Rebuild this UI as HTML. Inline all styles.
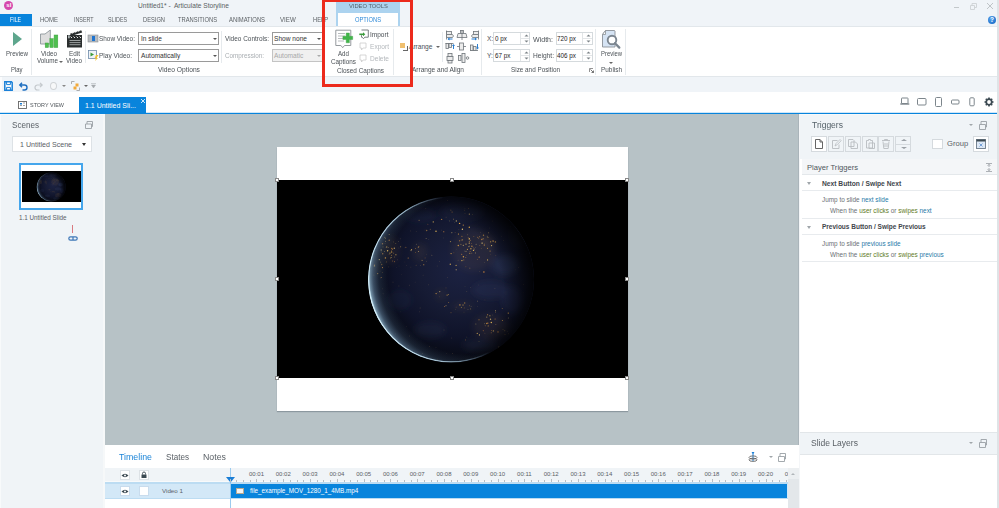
<!DOCTYPE html>
<html><head><meta charset="utf-8">
<style>
*{box-sizing:border-box}
html,body{margin:0;padding:0}
body{width:999px;height:508px;overflow:hidden;position:relative;background:#f0f4f8;font-family:"Liberation Sans",sans-serif;color:#505558}
.a{position:absolute}
.t{position:absolute;white-space:nowrap;line-height:10px;height:10px}
.sep{position:absolute;width:1px;background:#e6eaed}
.dd{position:absolute;background:#fff;border:1px solid #9a9a9a;height:13px}
.ar{position:absolute;width:0;height:0;border-left:2px solid transparent;border-right:2px solid transparent;border-top:2px solid #555}
.rl{font-size:6.6px;color:#4b5156}
.gl{font-size:6.5px;color:#4b5156}
svg{position:absolute;overflow:visible}
</style></head><body>

<!-- ===== Title bar ===== -->
<div class="a" style="left:4.2px;top:0.5px;width:9.3px;height:9.3px;border-radius:50%;background:#d548ad"></div>
<div class="t" style="left:6.3px;top:0px;font-size:6px;color:#fff;font-weight:bold">sl</div>
<div class="t" style="left:138px;top:0.7px;font-size:6.6px;color:#595e62">Untitled1* -&nbsp; Articulate Storyline</div>
<div class="a" style="left:954px;top:7px;width:5px;height:1px;background:#c3c8cb"></div>
<svg style="left:970px;top:3px" width="7" height="7"><path d="M0.5 2.5h4v4h-4z M2 2.5v-2h4.5v4h-2" fill="none" stroke="#cdd1d4" stroke-width="0.9"/></svg>
<svg style="left:987px;top:3px" width="6" height="6"><path d="M0 0L6 6M6 0L0 6" stroke="#b9bec1" stroke-width="0.9"/></svg>

<!-- ===== Tabs row ===== -->
<div class="a" style="left:0;top:14px;width:32px;height:12px;background:#0884dc"></div>
<div class="t" style="left:10px;top:15.2px;font-size:6.86px;color:#fff;transform:scaleX(0.76);transform-origin:0 50%">FILE</div>
<div class="t" style="left:40px;top:15.2px;font-size:6.86px;color:#5a5f63;transform:scaleX(0.875);transform-origin:0 50%">HOME</div>
<div class="t" style="left:74px;top:15.2px;font-size:6.86px;color:#5a5f63;transform:scaleX(0.78);transform-origin:0 50%">INSERT</div>
<div class="t" style="left:108px;top:15.2px;font-size:6.86px;color:#5a5f63;transform:scaleX(0.78);transform-origin:0 50%">SLIDES</div>
<div class="t" style="left:143px;top:15.2px;font-size:6.86px;color:#5a5f63;transform:scaleX(0.837);transform-origin:0 50%">DESIGN</div>
<div class="t" style="left:178px;top:15.2px;font-size:6.86px;color:#5a5f63;transform:scaleX(0.846);transform-origin:0 50%">TRANSITIONS</div>
<div class="t" style="left:229px;top:15.2px;font-size:6.86px;color:#5a5f63;transform:scaleX(0.854);transform-origin:0 50%">ANIMATIONS</div>
<div class="t" style="left:280px;top:15.2px;font-size:6.86px;color:#5a5f63;transform:scaleX(0.9);transform-origin:0 50%">VIEW</div>
<div class="t" style="left:313px;top:15.2px;font-size:6.86px;color:#5a5f63;transform:scaleX(0.85);transform-origin:0 50%">HELP</div>
<div class="a" style="left:988px;top:16px;width:8px;height:8px;border-radius:50%;background:radial-gradient(circle at 40% 35%,#5aa6ee,#0b5fc0)"></div>
<div class="t" style="left:990px;top:15px;font-size:6.5px;color:#fff;font-weight:bold">?</div>

<!-- video tools contextual -->
<div class="a" style="left:336px;top:2px;width:64px;height:25px;background:#acd3ef"></div>
<div class="t" style="left:349px;top:0.6px;font-size:6.17px;color:#53606a;transform:scaleX(0.937);transform-origin:0 50%">VIDEO TOOLS</div>
<div class="a" style="left:338px;top:13px;width:60px;height:14px;background:#fff"></div>
<div class="t" style="left:355px;top:15.2px;font-size:7.27px;color:#2f8ad8;transform:scaleX(0.795);transform-origin:0 50%">OPTIONS</div>

<!-- ===== Ribbon ===== -->
<div class="a" style="left:0;top:26px;width:997px;height:1px;background:#e2e7eb"></div>
<div class="a" style="left:0;top:27px;width:997px;height:49px;background:#fff"></div>
<div class="a" style="left:0;top:76px;width:997px;height:1px;background:#e2e7eb"></div>

<!-- group Play -->
<svg style="left:13px;top:32px" width="10" height="15"><path d="M0 0L9 7L0 14Z" fill="#5ea68d"/></svg>
<div class="t rl" style="left:6px;top:49px;font-size:6.60px;transform:scaleX(0.937);transform-origin:0 50%">Preview</div>
<div class="t gl" style="left:11px;top:65px;font-size:6.60px;transform:scaleX(0.896);transform-origin:0 50%">Play</div>
<div class="sep" style="left:31px;top:29px;height:46px"></div>

<!-- Video Volume / Edit Video -->
<svg style="left:36px;top:28px" width="24" height="22">
 <path d="M4.5 6h4.5l5.3-4v14h-5.3h-4.5z" fill="#dedede" stroke="#8f979c" stroke-width="0.9" stroke-linejoin="round"/>
 <rect x="9.2" y="15" width="3.3" height="4.5" fill="#4fc04f" stroke="#3fa03f" stroke-width="0.5"/>
 <rect x="13.9" y="10.7" width="3.3" height="8.8" fill="#4fc04f" stroke="#3fa03f" stroke-width="0.5"/>
 <rect x="18.1" y="7" width="3.7" height="12.5" fill="#4fc04f" stroke="#3fa03f" stroke-width="0.5"/>
</svg>
<div class="t rl" style="left:41px;top:49px;font-size:6.60px;transform:scaleX(0.955);transform-origin:0 50%">Video</div>
<div class="t rl" style="left:37px;top:56px;font-size:6.60px;transform:scaleX(0.954);transform-origin:0 50%">Volume</div>
<div class="ar" style="left:59px;top:61px;border-top-color:#666"></div>
<svg style="left:66px;top:28px" width="18" height="22">
 <rect x="1" y="7" width="15" height="12.5" fill="#2b2f2f"/>
 <rect x="2" y="7.3" width="1.8" height="3" fill="#a8b0b0"/>
 <path d="M4.5 8.5l1.5 1.5M7.5 8.5l1.5 1.5M10.5 8.5l1.5 1.5M13.5 8.5l1.5 1.5" stroke="#e8e8e8" stroke-width="1"/>
 <path d="M3.5 12.5h11M3.5 14.6h11M3.5 16.7h11" stroke="#b8bcbc" stroke-width="0.8"/>
 <path d="M4 5.8L15.2 2.2L16.2 4.6L5 8z" fill="#2b2f2f"/>
 <path d="M6.5 5.6l1.5-1.8M9.5 4.7l1.5-1.8M12.5 3.8l1.5-1.8" stroke="#e8e8e8" stroke-width="1"/>
</svg>
<div class="t rl" style="left:69px;top:49px;font-size:6.60px;transform:scaleX(0.967);transform-origin:0 50%">Edit</div>
<div class="t rl" style="left:66px;top:56px;font-size:6.60px;transform:scaleX(0.955);transform-origin:0 50%">Video</div>
<div class="sep" style="left:85px;top:31px;height:32px"></div>

<!-- Show/Play video -->
<svg style="left:88px;top:34px" width="11" height="9">
 <rect x="0" y="1" width="10" height="7" fill="#b8bcc0" stroke="#8a8e92" stroke-width="0.6"/>
 <rect x="4" y="2" width="3" height="5" fill="#1e74d0"/>
</svg>
<div class="t rl" style="left:99px;top:34px;font-size:6.60px;transform:scaleX(0.975);transform-origin:0 50%">Show Video:</div>
<svg style="left:88px;top:50px" width="11" height="11">
 <rect x="0.5" y="0.5" width="8" height="8" fill="#eef3f8" stroke="#6d8aa8" stroke-width="0.8"/>
 <path d="M2.5 2.5L6 4.5L2.5 6.5Z" fill="#3a9a3a"/>
 <path d="M8 5L10.5 5L8.5 8L10 8L7 11L8 8.5L6.5 8.5Z" fill="#f1c232"/>
</svg>
<div class="t rl" style="left:99px;top:51px;font-size:6.60px;transform:scaleX(0.992);transform-origin:0 50%">Play Video:</div>
<div class="dd" style="left:138px;top:32px;width:81px"></div>
<div class="t" style="left:141px;top:34px;font-size:6.6px;color:#333">In slide</div>
<div class="ar" style="left:213px;top:38px"></div>
<div class="dd" style="left:138px;top:49px;width:81px"></div>
<div class="t" style="left:141px;top:51px;font-size:6.6px;color:#333">Automatically</div>
<div class="ar" style="left:213px;top:55px"></div>
<div class="sep" style="left:221px;top:31px;height:32px"></div>
<div class="t rl" style="left:225px;top:34px;font-size:6.60px;transform:scaleX(0.978);transform-origin:0 50%">Video Controls:</div>
<div class="t" style="left:225px;top:51px;font-size:6.60px;color:#a9aeb2;transform:scaleX(0.958);transform-origin:0 50%">Compression:</div>
<div class="dd" style="left:272px;top:32px;width:52px"></div>
<div class="t" style="left:274px;top:34px;font-size:6.6px;color:#333">Show none</div>
<div class="ar" style="left:317px;top:38px"></div>
<div class="dd" style="left:272px;top:49px;width:52px;background:#f0f0f0;border-color:#c4c4c4"></div>
<div class="t" style="left:274px;top:51px;font-size:6.6px;color:#a8a8a8">Automatic</div>
<div class="ar" style="left:317px;top:55px;border-top-color:#aaa"></div>
<div class="t gl" style="left:158px;top:65px;font-size:6.60px;transform:scaleX(1.016);transform-origin:0 50%">Video Options</div>

<!-- Closed captions -->
<svg style="left:335px;top:29px" width="19" height="21">
 <path d="M0.8 1.2h15v15.3h-6.3l-1.8 2.2l-1.8-2.2h-5.1z" fill="#fff" stroke="#8a9094" stroke-width="0.9" stroke-linejoin="round"/>
 <path d="M3 4.5h7M3 7h7M3 9.5h7M3 12h6" stroke="#a6abaf" stroke-width="0.8"/>
 <path d="M11.2 4h3.2v3.3h3.3v3.2h-3.3v3.3h-3.2v-3.3h-3.3v-3.2h3.3z" fill="#41b64a" stroke="#3a9c42" stroke-width="0.4"/>
</svg>
<div class="t rl" style="left:338px;top:49px;font-size:6.60px;transform:scaleX(0.937);transform-origin:0 50%">Add</div>
<div class="t rl" style="left:331px;top:57px;font-size:6.60px;transform:scaleX(0.960);transform-origin:0 50%">Captions</div>
<svg style="left:359px;top:29px" width="10" height="11">
 <path d="M2.5 1h6.8v7.2h-3.5l-1.3 1.5l-1.3-1.5h-0.7v-2" fill="#fff" stroke="#6a7074" stroke-width="0.9" stroke-linejoin="round"/>
 <path d="M0.3 5.3h4.5" stroke="#3a9a3a" stroke-width="1.6"/><path d="M4 3.3l2.3 2l-2.3 2z" fill="#3a9a3a"/>
</svg>
<div class="t rl" style="left:370px;top:30px;font-size:6.60px;transform:scaleX(0.989);transform-origin:0 50%">Import</div>
<svg style="left:359px;top:42px" width="8" height="9">
 <path d="M1 1h6v5h-3l-1.5 2v-2h-1.5z" fill="#fff" stroke="#ccc" stroke-width="0.8"/>
</svg>
<div class="t" style="left:370px;top:42px;font-size:6.60px;color:#b4b8bc;transform:scaleX(0.996);transform-origin:0 50%">Export</div>
<svg style="left:359px;top:54px" width="8" height="9">
 <path d="M1 1h6v5h-3l-1.5 2v-2h-1.5z" fill="#fff" stroke="#ccc" stroke-width="0.8"/>
</svg>
<div class="t" style="left:370px;top:54px;font-size:6.60px;color:#b4b8bc;transform:scaleX(0.996);transform-origin:0 50%">Delete</div>
<div class="t gl" style="left:337px;top:65.5px;font-size:6.60px;transform:scaleX(0.971);transform-origin:0 50%">Closed Captions</div>
<div class="sep" style="left:393px;top:29px;height:46px"></div>

<!-- Arrange -->
<div class="a" style="left:400px;top:43px;width:5px;height:5px;background:#f0c070"></div>
<div class="a" style="left:403px;top:46px;width:5px;height:5px;border:1px solid #666;border-top:none;border-left:none"></div>
<div class="t rl" style="left:409px;top:42px">Arrange</div>
<div class="ar" style="left:436px;top:46px;border-top-color:#666"></div>
<div class="sep" style="left:442px;top:32px;height:30px"></div>
<div class="t gl" style="left:412px;top:65px;font-size:6.60px;transform:scaleX(0.991);transform-origin:0 50%">Arrange and Align</div>

<!-- align icon grid -->
<svg style="left:445px;top:30px" width="36" height="34" stroke-width="0.8">
 <g fill="#ececec" stroke="#6f757a">
  <path d="M1.5 0.5v9"/><rect x="1.5" y="1.5" width="5" height="3"/><path d="M1.5 4.5h6l1 1.5l-1 1.5h-6z"/>
  <rect x="15.5" y="0.5" width="3" height="3"/><path d="M13 3.5h8l1 4h-10z"/><path d="M17 0v10"/>
  <path d="M33.5 0.5v9"/><rect x="28.5" y="1.5" width="5" height="3"/><path d="M33.5 4.5h-6l-1 1.5l1 1.5h6z"/>
  <path d="M0.5 13.5h8"/><rect x="1" y="13.5" width="2.5" height="5"/><rect x="4" y="13.5" width="2.5" height="4"/>
  <rect x="14.5" y="13" width="4" height="7"/><path d="M12 16.5h2.5M18.5 16.5h2.5"/>
  <path d="M25 20.5h8"/><rect x="25.5" y="15" width="2.5" height="5.5"/><rect x="28.5" y="16.5" width="2.5" height="4"/>
  <rect x="3" y="23.5" width="4" height="3"/><rect x="2" y="26.5" width="6" height="4"/><rect x="3" y="30.5" width="4" height="2.5"/>
  <rect x="13.5" y="25.5" width="2.5" height="5"/><rect x="17" y="23.5" width="3" height="9"/><circle cx="22.5" cy="28" r="1.3"/>
 </g>
 <g stroke="#2a7ed0" fill="#2a7ed0">
  <path d="M3 9h4.5" stroke-width="1"/><path d="M2.5 9l2-1.5v3z" stroke="none"/>
  <path d="M26.5 9h4.5" stroke-width="1"/><path d="M32 9l-2-1.5v3z" stroke="none"/>
  <path d="M8.5 19v-4" stroke-width="1"/><path d="M8.5 14l-1.5 2h3z" stroke="none"/>
  <path d="M32.5 14v4" stroke-width="1"/><path d="M32.5 19.5l-1.5-2h3z" stroke="none"/>
 </g>
</svg>
<div class="sep" style="left:481px;top:29px;height:46px"></div>

<!-- Size and position -->
<div class="t rl" style="left:487px;top:34px">X:</div>
<div class="a" style="left:493px;top:32px;width:37px;height:13px;border:1px solid #d5dadd;background:#fff"></div>
<div class="a" style="left:520px;top:33px;width:1px;height:11px;background:#e2e5e7"></div>
<div class="a" style="left:521px;top:38px;width:8px;height:1px;background:#e2e5e7"></div>
<div class="t" style="left:495px;top:34px;font-size:6.3px;color:#222">0 px</div>
<div class="t rl" style="left:487px;top:51px">Y:</div>
<div class="a" style="left:493px;top:49px;width:37px;height:13px;border:1px solid #d5dadd;background:#fff"></div>
<div class="a" style="left:520px;top:50px;width:1px;height:11px;background:#e2e5e7"></div>
<div class="a" style="left:521px;top:55px;width:8px;height:1px;background:#e2e5e7"></div>
<div class="t" style="left:495px;top:51px;font-size:6.3px;color:#222">67 px</div>
<div class="t rl" style="left:533px;top:35px;font-size:6.60px;transform:scaleX(1.069);transform-origin:0 50%">Width:</div>
<div class="a" style="left:556px;top:32px;width:37px;height:13px;border:1px solid #d5dadd;background:#fff"></div>
<div class="a" style="left:582px;top:33px;width:1px;height:11px;background:#e2e5e7"></div>
<div class="a" style="left:583px;top:38px;width:9px;height:1px;background:#e2e5e7"></div>
<div class="t" style="left:557px;top:34px;font-size:6.3px;color:#222">720 px</div>
<div class="t rl" style="left:533px;top:51px;font-size:6.60px;transform:scaleX(1.004);transform-origin:0 50%">Height:</div>
<div class="a" style="left:556px;top:49px;width:37px;height:13px;border:1px solid #d5dadd;background:#fff"></div>
<div class="a" style="left:582px;top:50px;width:1px;height:11px;background:#e2e5e7"></div>
<div class="a" style="left:583px;top:55px;width:9px;height:1px;background:#e2e5e7"></div>
<div class="t" style="left:557px;top:51px;font-size:6.3px;color:#222">406 px</div>
<svg style="left:523.5px;top:32px" width="5" height="13"><path d="M0.5 4.5L2.5 2.5L4.5 4.5z" fill="#7d8388"/><path d="M0.5 8.5L2.5 10.5L4.5 8.5z" fill="#7d8388"/></svg><svg style="left:523.5px;top:49px" width="5" height="13"><path d="M0.5 4.5L2.5 2.5L4.5 4.5z" fill="#7d8388"/><path d="M0.5 8.5L2.5 10.5L4.5 8.5z" fill="#7d8388"/></svg><svg style="left:585.5px;top:32px" width="5" height="13"><path d="M0.5 4.5L2.5 2.5L4.5 4.5z" fill="#7d8388"/><path d="M0.5 8.5L2.5 10.5L4.5 8.5z" fill="#7d8388"/></svg><svg style="left:585.5px;top:49px" width="5" height="13"><path d="M0.5 4.5L2.5 2.5L4.5 4.5z" fill="#7d8388"/><path d="M0.5 8.5L2.5 10.5L4.5 8.5z" fill="#7d8388"/></svg>
<div class="t gl" style="left:511px;top:65px;font-size:6.60px;transform:scaleX(0.961);transform-origin:0 50%">Size and Position</div>
<svg style="left:589px;top:68px" width="5" height="5"><path d="M0.5 4V0.5H4" fill="none" stroke="#777" stroke-width="0.8"/><path d="M1.5 1.5L4.5 4.5M2.5 4.5h2v-2" fill="none" stroke="#555" stroke-width="0.8"/></svg>
<div class="sep" style="left:595px;top:29px;height:46px"></div>

<!-- Preview publish -->
<svg style="left:601px;top:29px" width="21" height="21">
 <path d="M4.5 1.5h9l0.5 0.5v16h-12.5v-12.5z" fill="#d6e4f4" stroke="#8a9096" stroke-width="0.9" stroke-linejoin="round"/>
 <path d="M1.5 5.5l3-4v4z" fill="#fff" stroke="#8a9096" stroke-width="0.8" stroke-linejoin="round"/>
 <circle cx="11" cy="11" r="4.3" fill="#fff" stroke="#7c8690" stroke-width="1.9"/>
 <path d="M14 14.3l4.3 4.3" stroke="#7c8690" stroke-width="2.3" stroke-linecap="round"/>
</svg>
<div class="t rl" style="left:601px;top:49px;font-size:6.60px;transform:scaleX(0.895);transform-origin:0 50%">Preview</div>
<div class="ar" style="left:609px;top:62px;border-top-color:#666"></div>
<div class="t gl" style="left:601px;top:65px;font-size:6.60px;transform:scaleX(0.970);transform-origin:0 50%">Publish</div>
<div class="sep" style="left:625px;top:29px;height:46px"></div>

<!-- QAT -->
<div class="a" style="left:0;top:77px;width:997px;height:15px;background:#f0f4f8"></div>
<svg style="left:4px;top:81px" width="9" height="10"><path d="M0.8 0.8h6.6l0.8 0.8v7.6h-7.4z" fill="#fff" stroke="#1a80d8" stroke-width="1.5"/><path d="M2.6 1v2.6h3.8v-2.6" fill="none" stroke="#1a80d8" stroke-width="1"/><path d="M2.6 9v-2.6h3.8v2.6" fill="none" stroke="#1a80d8" stroke-width="1"/></svg>
<svg style="left:19px;top:82px" width="9" height="8"><path d="M1 3h4.5a2.5 2.5 0 0 1 0 5h-2M3 0.8L0.8 3L3 5.2" fill="none" stroke="#1f6fc0" stroke-width="1.4"/></svg>
<svg style="left:34px;top:82px" width="9" height="8"><path d="M8 3h-4.5a2.5 2.5 0 0 0 0 5h2M6 0.8L8.2 3L6 5.2" fill="none" stroke="#c4c9cd" stroke-width="1.2"/></svg>
<div class="a" style="left:50px;top:82px;width:7px;height:8px;border-radius:50%;border:1px solid #d0d4d7;background:#f7f8f9"></div>
<div class="ar" style="left:62px;top:85px;border-top-color:#888"></div>
<svg style="left:71px;top:81px" width="9" height="10">
 <path d="M0.5 3v-2.5h3M5.5 9.5h3v-3" fill="none" stroke="#999" stroke-width="0.8"/>
 <rect x="2.5" y="5.5" width="3" height="3" fill="#f2a93b"/><rect x="4.5" y="2.5" width="3" height="3" fill="#f2a93b"/>
</svg>
<div class="ar" style="left:84px;top:85px;border-top-color:#666"></div>
<svg style="left:91px;top:83px" width="5" height="5"><path d="M0 0.5h5M0.5 2l2 3l2-3z" fill="#a5aaae" stroke="#a5aaae" stroke-width="0.5"/></svg>

<!-- Doc tab row -->
<div class="a" style="left:0;top:92px;width:997px;height:21px;background:#fff"></div>
<div class="a" style="left:0;top:112px;width:997px;height:1px;background:#cfe6f8"></div><div class="a" style="left:0;top:113px;width:999px;height:1px;background:#0884dc"></div>
<div class="a" style="left:79px;top:97px;width:67px;height:16px;background:#0884dc"></div>
<svg style="left:18px;top:101px" width="9" height="8"><rect x="0.5" y="0.5" width="8" height="7" fill="#fff" stroke="#666" stroke-width="0.9"/><rect x="2" y="2" width="2" height="1.5" fill="#1a7ed6"/><path d="M2 4.5h2M5 2h2M5 4.5h2" stroke="#888" stroke-width="0.8"/></svg>
<div class="t" style="left:30px;top:100.3px;font-size:6.17px;color:#4d5358;transform:scaleX(0.885);transform-origin:0 50%">STORY VIEW</div>
<div class="t" style="left:85px;top:100.7px;font-size:7.0px;color:#fff">1.1 Untitled Sli...</div>
<svg style="left:141px;top:99px" width="4" height="4"><path d="M0 0L4 4M4 0L0 4" stroke="#fff" stroke-width="0.8"/></svg>
<!-- device icons -->
<svg style="left:900px;top:96px" width="80" height="11" fill="none" stroke="#7d868c" stroke-width="1">
 <rect x="1.5" y="2" width="6.5" height="5.5" rx="0.5"/><path d="M0.3 8h9" stroke-width="1.4"/>
 <rect x="17.5" y="2.5" width="8.5" height="6.5" rx="1"/>
 <rect x="35.5" y="1.5" width="6" height="9" rx="1"/>
 <rect x="51.5" y="4" width="7.5" height="4" rx="1"/>
 <rect x="69.8" y="1.8" width="4.4" height="8" rx="1"/>
</svg>
<svg style="left:984px;top:97px" width="10" height="10"><g transform="translate(5,5)"><circle r="2.8" fill="none" stroke="#3c4a52" stroke-width="1.8"/><path d="M0-4.5v2M0 4.5v-2M-4.5 0h2M4.5 0h-2M-3.2-3.2l1.4 1.4M3.2 3.2l-1.4-1.4M-3.2 3.2l1.4-1.4M3.2-3.2l-1.4 1.4" stroke="#3c4a52" stroke-width="1.6"/></g></svg>

<!-- ===== Left panel ===== -->
<div class="a" style="left:0;top:114px;width:105px;height:394px;background:#f0f4f7"></div>
<div class="a" style="left:103px;top:114px;width:2px;height:394px;background:#f6f8f9"></div><div class="a" style="left:0;top:114px;width:105px;height:1px;background:#f7f9fa"></div>
<div class="t" style="left:12px;top:120px;font-size:8.64px;color:#5a6066;transform:scaleX(0.937);transform-origin:0 50%">Scenes</div>
<svg style="left:85px;top:121px" width="8" height="8"><path d="M0.5 3h6v4.5h-6z M2 3v-2.5h5.5v5h-1" fill="none" stroke="#9aa0a5" stroke-width="0.9"/></svg>
<div class="a" style="left:12px;top:136px;width:80px;height:16px;background:#fff;border:1px solid #dde2e6"></div>
<div class="t" style="left:20px;top:140px;font-size:7.1px;color:#5a6066">1 Untitled Scene</div>
<div class="ar" style="left:82px;top:143px;border-left-width:2.5px;border-right-width:2.5px;border-top-width:3px;border-top-color:#333"></div>
<div class="a" style="left:19px;top:163px;width:64px;height:47px;border:2px solid #45a6ec;background:#fff"></div>
<div class="a" style="left:22px;top:171px;width:59px;height:31px;background:#000;overflow:hidden">
<svg style="left:0;top:0" width="59" height="31"><g transform="translate(29.2,16) scale(0.175) translate(-174,-99.5)"><use href="#earthg"/></g></svg>
</div>
<div class="t" style="left:19px;top:213px;font-size:6.3px;color:#5a6066">1.1 Untitled Slide</div>
<div class="a" style="left:72px;top:225px;width:1px;height:8px;background:#d97a80"></div>
<svg style="left:68px;top:236px" width="10" height="5"><path d="M2.5 0.8h5a1.7 1.7 0 0 1 0 3.4h-5a1.7 1.7 0 0 1 0-3.4z M5 0.8v3.4" fill="none" stroke="#3e78b8" stroke-width="1.2"/></svg>

<!-- ===== Canvas ===== -->
<div class="a" style="left:105px;top:114px;width:694px;height:331px;background:#b7c2c6"></div><div class="a" style="left:798px;top:114px;width:1px;height:331px;background:#aab4ba"></div>
<div class="a" style="left:277px;top:147px;width:351px;height:264px;background:#fff;box-shadow:0 1px 1px rgba(60,75,85,0.35)"></div>
<div class="a" style="left:277px;top:180px;width:351px;height:198px;background:#000;overflow:hidden">
<svg style="left:0;top:0" width="351" height="198">
<defs>
 <radialGradient id="eb" cx="0.56" cy="0.44" r="0.56">
  <stop offset="0" stop-color="#1c2242"/>
  <stop offset="0.45" stop-color="#161b34"/>
  <stop offset="0.72" stop-color="#0f1329"/>
  <stop offset="0.88" stop-color="#0a0d1b"/>
  <stop offset="1" stop-color="#080a14"/>
 </radialGradient>
 <radialGradient id="eh" cx="0.6" cy="0.47" r="0.6">
  <stop offset="0.8" stop-color="#3e5870" stop-opacity="0"/>
  <stop offset="0.89" stop-color="#4a6580" stop-opacity="0.25"/>
  <stop offset="0.95" stop-color="#6585a2" stop-opacity="0.55"/>
  <stop offset="0.985" stop-color="#8cb0c8" stop-opacity="0.8"/>
  <stop offset="1" stop-color="#b8dcec" stop-opacity="1"/>
 </radialGradient>
 <radialGradient id="ed" cx="0.38" cy="0.56" r="0.62">
  <stop offset="0.7" stop-color="#000" stop-opacity="0"/>
  <stop offset="1" stop-color="#000" stop-opacity="0.85"/>
 </radialGradient>
 <linearGradient id="er" x1="0" y1="0.6" x2="1" y2="0.3">
  <stop offset="0" stop-color="#d4eef8" stop-opacity="1"/>
  <stop offset="0.35" stop-color="#b4d4e6" stop-opacity="0.8"/>
  <stop offset="0.58" stop-color="#90b0c8" stop-opacity="0"/>
 </linearGradient>
 <clipPath id="ec"><circle cx="174" cy="99.5" r="83"/></clipPath>
 <filter id="bl" x="-50%" y="-50%" width="200%" height="200%"><feGaussianBlur stdDeviation="3"/></filter>
 <filter id="bl2"><feGaussianBlur stdDeviation="0.35"/></filter>
</defs>
<g id="earthg"><circle cx="174" cy="99.5" r="83" fill="url(#eb)"/>
<g clip-path="url(#ec)">
 <g filter="url(#bl)"><ellipse cx="228.0" cy="85.0" rx="14" ry="10" fill="#3f4c75" opacity="0.26"/><ellipse cx="213.0" cy="110.0" rx="18" ry="9" fill="#3f4c75" opacity="0.19"/><ellipse cx="185.0" cy="32.0" rx="22" ry="8" fill="#3f4c75" opacity="0.17"/><ellipse cx="235.0" cy="120.0" rx="10" ry="14" fill="#3f4c75" opacity="0.19"/><ellipse cx="153.0" cy="150.0" rx="16" ry="8" fill="#3f4c75" opacity="0.15"/><ellipse cx="123.0" cy="120.0" rx="12" ry="10" fill="#3f4c75" opacity="0.11"/><ellipse cx="243.0" cy="55.0" rx="10" ry="12" fill="#3f4c75" opacity="0.15"/><ellipse cx="203.0" cy="165.0" rx="18" ry="7" fill="#3f4c75" opacity="0.15"/><ellipse cx="143.0" cy="35.0" rx="16" ry="8" fill="#3f4c75" opacity="0.11"/><ellipse cx="113.0" cy="70.0" rx="9.0" ry="14.0" fill="#9a7440" opacity="0.1"/><ellipse cx="143.0" cy="72.0" rx="7.0" ry="9.0" fill="#9a7440" opacity="0.1"/><ellipse cx="196.5" cy="70.0" rx="21.5" ry="21.0" fill="#9a7440" opacity="0.1"/><ellipse cx="210.5" cy="61.5" rx="7.5" ry="5.5" fill="#9a7440" opacity="0.1"/><ellipse cx="185.5" cy="126.5" rx="10.5" ry="3.5" fill="#9a7440" opacity="0.1"/><ellipse cx="214.0" cy="146.5" rx="18.0" ry="12.5" fill="#9a7440" opacity="0.1"/><ellipse cx="164.0" cy="115.0" rx="5.0" ry="5.0" fill="#9a7440" opacity="0.1"/><ellipse cx="99.0" cy="85.0" rx="4.0" ry="10.0" fill="#9a7440" opacity="0.1"/></g>
 <g filter="url(#bl2)"><circle cx="105.7" cy="73.8" r="0.70" fill="#d98c3a" opacity="0.70"/><circle cx="109.7" cy="66.7" r="0.70" fill="#e8a845" opacity="0.46"/><circle cx="112.1" cy="74.1" r="0.35" fill="#d98c3a" opacity="0.98"/><circle cx="108.3" cy="58.6" r="0.45" fill="#f3c25a" opacity="0.90"/><circle cx="114.5" cy="71.0" r="0.45" fill="#f3c25a" opacity="0.87"/><circle cx="109.3" cy="81.9" r="0.45" fill="#e8a845" opacity="0.78"/><circle cx="104.2" cy="70.0" r="0.70" fill="#ffd77a" opacity="0.64"/><circle cx="99.8" cy="62.7" r="0.35" fill="#ffd77a" opacity="0.59"/><circle cx="113.6" cy="78.2" r="0.35" fill="#f3c25a" opacity="0.64"/><circle cx="116.4" cy="61.9" r="0.35" fill="#f3c25a" opacity="0.53"/><circle cx="114.8" cy="68.5" r="0.70" fill="#d98c3a" opacity="0.65"/><circle cx="109.3" cy="67.3" r="0.55" fill="#ffd77a" opacity="0.45"/><circle cx="105.3" cy="92.4" r="0.35" fill="#e8a845" opacity="0.55"/><circle cx="114.7" cy="72.1" r="0.70" fill="#e8a845" opacity="0.81"/><circle cx="115.7" cy="81.0" r="0.45" fill="#d98c3a" opacity="0.79"/><circle cx="117.7" cy="77.0" r="0.45" fill="#f3c25a" opacity="0.56"/><circle cx="123.6" cy="66.7" r="0.55" fill="#f3c25a" opacity="0.53"/><circle cx="103.7" cy="82.1" r="0.35" fill="#f3c25a" opacity="0.99"/><circle cx="114.1" cy="77.5" r="0.55" fill="#ffd77a" opacity="0.63"/><circle cx="116.7" cy="73.1" r="0.45" fill="#f3c25a" opacity="0.76"/><circle cx="108.4" cy="77.9" r="0.70" fill="#e8a845" opacity="0.92"/><circle cx="114.4" cy="75.3" r="0.45" fill="#e8a845" opacity="0.84"/><circle cx="117.6" cy="81.8" r="0.45" fill="#d98c3a" opacity="0.93"/><circle cx="108.0" cy="63.7" r="0.35" fill="#f3c25a" opacity="0.42"/><circle cx="117.3" cy="68.3" r="0.70" fill="#ffd77a" opacity="0.65"/><circle cx="118.8" cy="63.5" r="0.45" fill="#f3c25a" opacity="0.48"/><circle cx="104.3" cy="71.9" r="0.35" fill="#ffd77a" opacity="0.53"/><circle cx="121.6" cy="61.5" r="0.35" fill="#ffd77a" opacity="0.65"/><circle cx="113.0" cy="73.1" r="0.55" fill="#ffd77a" opacity="0.72"/><circle cx="115.6" cy="69.3" r="0.45" fill="#d98c3a" opacity="0.99"/><circle cx="107.9" cy="57.2" r="0.45" fill="#f3c25a" opacity="0.95"/><circle cx="107.4" cy="71.5" r="0.55" fill="#f3c25a" opacity="0.41"/><circle cx="108.5" cy="61.3" r="0.55" fill="#ffd77a" opacity="0.48"/><circle cx="118.9" cy="74.8" r="0.55" fill="#f3c25a" opacity="0.94"/><circle cx="112.2" cy="54.5" r="0.55" fill="#ffd77a" opacity="0.45"/><circle cx="110.6" cy="70.7" r="0.70" fill="#f3c25a" opacity="0.92"/><circle cx="105.5" cy="63.8" r="0.70" fill="#d98c3a" opacity="0.75"/><circle cx="111.1" cy="67.4" r="0.35" fill="#ffd77a" opacity="0.93"/><circle cx="112.2" cy="60.2" r="0.70" fill="#d98c3a" opacity="0.68"/><circle cx="106.0" cy="66.9" r="0.35" fill="#ffd77a" opacity="0.76"/><circle cx="138.7" cy="72.7" r="0.35" fill="#d98c3a" opacity="0.87"/><circle cx="139.3" cy="64.2" r="0.35" fill="#ffd77a" opacity="0.58"/><circle cx="141.2" cy="67.2" r="0.45" fill="#ffd77a" opacity="0.80"/><circle cx="131.2" cy="78.0" r="0.55" fill="#d98c3a" opacity="0.80"/><circle cx="145.0" cy="80.1" r="0.45" fill="#e8a845" opacity="0.63"/><circle cx="138.5" cy="68.5" r="0.45" fill="#e8a845" opacity="0.70"/><circle cx="149.1" cy="58.7" r="0.35" fill="#ffd77a" opacity="0.89"/><circle cx="148.1" cy="77.9" r="0.45" fill="#d98c3a" opacity="0.63"/><circle cx="134.1" cy="70.5" r="0.70" fill="#ffd77a" opacity="0.44"/><circle cx="154.9" cy="75.2" r="0.35" fill="#ffd77a" opacity="0.74"/><circle cx="139.1" cy="85.2" r="0.35" fill="#e8a845" opacity="0.64"/><circle cx="146.8" cy="84.7" r="0.55" fill="#e8a845" opacity="0.87"/><circle cx="148.0" cy="50.0" r="0.35" fill="#d98c3a" opacity="0.47"/><circle cx="134.6" cy="69.5" r="0.55" fill="#f3c25a" opacity="0.81"/><circle cx="145.1" cy="80.6" r="0.45" fill="#f3c25a" opacity="0.85"/><circle cx="141.4" cy="71.5" r="0.45" fill="#ffd77a" opacity="0.87"/><circle cx="128.9" cy="67.2" r="0.45" fill="#d98c3a" opacity="0.91"/><circle cx="141.7" cy="66.6" r="0.70" fill="#d98c3a" opacity="0.48"/><circle cx="176.9" cy="72.8" r="0.35" fill="#d98c3a" opacity="0.73"/><circle cx="184.9" cy="56.4" r="0.55" fill="#d98c3a" opacity="0.60"/><circle cx="198.4" cy="67.4" r="0.35" fill="#e8a845" opacity="0.55"/><circle cx="189.0" cy="71.3" r="0.55" fill="#ffd77a" opacity="0.56"/><circle cx="192.6" cy="65.9" r="0.35" fill="#f3c25a" opacity="0.66"/><circle cx="173.5" cy="61.6" r="0.70" fill="#f3c25a" opacity="0.53"/><circle cx="201.6" cy="58.6" r="0.35" fill="#e8a845" opacity="0.72"/><circle cx="182.6" cy="43.4" r="0.70" fill="#e8a845" opacity="1.00"/><circle cx="204.8" cy="59.5" r="0.70" fill="#d98c3a" opacity="0.75"/><circle cx="185.4" cy="49.3" r="0.70" fill="#ffd77a" opacity="0.90"/><circle cx="186.3" cy="65.3" r="0.55" fill="#ffd77a" opacity="0.80"/><circle cx="216.3" cy="61.2" r="0.45" fill="#ffd77a" opacity="0.91"/><circle cx="207.3" cy="65.1" r="0.70" fill="#e8a845" opacity="0.65"/><circle cx="193.9" cy="68.8" r="0.70" fill="#f3c25a" opacity="0.72"/><circle cx="218.8" cy="75.3" r="0.35" fill="#d98c3a" opacity="0.46"/><circle cx="206.9" cy="92.0" r="0.70" fill="#d98c3a" opacity="0.95"/><circle cx="196.8" cy="56.4" r="0.45" fill="#d98c3a" opacity="0.70"/><circle cx="179.2" cy="89.8" r="0.70" fill="#ffd77a" opacity="0.47"/><circle cx="190.4" cy="69.4" r="0.55" fill="#e8a845" opacity="0.82"/><circle cx="196.2" cy="67.5" r="0.45" fill="#e8a845" opacity="0.41"/><circle cx="188.9" cy="86.8" r="0.45" fill="#d98c3a" opacity="0.46"/><circle cx="192.3" cy="61.9" r="0.55" fill="#e8a845" opacity="0.82"/><circle cx="194.9" cy="66.2" r="0.70" fill="#e8a845" opacity="0.72"/><circle cx="202.7" cy="56.8" r="0.45" fill="#e8a845" opacity="0.91"/><circle cx="174.9" cy="52.7" r="0.45" fill="#ffd77a" opacity="0.94"/><circle cx="188.8" cy="77.6" r="0.45" fill="#e8a845" opacity="0.87"/><circle cx="194.8" cy="73.1" r="0.45" fill="#e8a845" opacity="0.84"/><circle cx="192.7" cy="73.4" r="0.70" fill="#e8a845" opacity="0.52"/><circle cx="178.1" cy="52.5" r="0.35" fill="#e8a845" opacity="0.74"/><circle cx="179.1" cy="85.4" r="0.55" fill="#f3c25a" opacity="0.82"/><circle cx="185.7" cy="59.8" r="0.45" fill="#f3c25a" opacity="0.69"/><circle cx="213.1" cy="71.1" r="0.70" fill="#e8a845" opacity="0.51"/><circle cx="198.5" cy="72.9" r="0.45" fill="#ffd77a" opacity="0.96"/><circle cx="196.5" cy="70.4" r="0.70" fill="#f3c25a" opacity="0.86"/><circle cx="186.8" cy="79.9" r="0.55" fill="#d98c3a" opacity="0.53"/><circle cx="181.1" cy="80.2" r="0.35" fill="#e8a845" opacity="0.51"/><circle cx="174.1" cy="73.6" r="0.70" fill="#e8a845" opacity="0.76"/><circle cx="210.6" cy="79.9" r="0.55" fill="#f3c25a" opacity="0.88"/><circle cx="186.3" cy="45.1" r="0.70" fill="#e8a845" opacity="0.70"/><circle cx="214.6" cy="65.6" r="0.55" fill="#ffd77a" opacity="0.95"/><circle cx="192.3" cy="47.2" r="0.70" fill="#e8a845" opacity="0.94"/><circle cx="206.5" cy="55.3" r="0.70" fill="#e8a845" opacity="0.64"/><circle cx="192.2" cy="63.5" r="0.55" fill="#ffd77a" opacity="0.68"/><circle cx="204.2" cy="68.7" r="0.35" fill="#e8a845" opacity="0.56"/><circle cx="202.8" cy="65.6" r="0.45" fill="#d98c3a" opacity="0.74"/><circle cx="181.3" cy="65.5" r="0.70" fill="#e8a845" opacity="0.82"/><circle cx="195.5" cy="34.5" r="0.35" fill="#f3c25a" opacity="0.77"/><circle cx="192.3" cy="58.8" r="0.70" fill="#f3c25a" opacity="0.86"/><circle cx="191.9" cy="66.6" r="0.55" fill="#ffd77a" opacity="0.57"/><circle cx="184.9" cy="80.6" r="0.70" fill="#f3c25a" opacity="0.78"/><circle cx="194.7" cy="63.6" r="0.35" fill="#d98c3a" opacity="0.96"/><circle cx="200.3" cy="79.4" r="0.45" fill="#d98c3a" opacity="0.73"/><circle cx="182.6" cy="60.8" r="0.70" fill="#d98c3a" opacity="0.57"/><circle cx="184.7" cy="74.2" r="0.55" fill="#d98c3a" opacity="0.79"/><circle cx="183.9" cy="64.4" r="0.55" fill="#f3c25a" opacity="0.41"/><circle cx="193.1" cy="71.5" r="0.45" fill="#d98c3a" opacity="0.85"/><circle cx="173.3" cy="84.3" r="0.70" fill="#f3c25a" opacity="0.75"/><circle cx="191.2" cy="57.6" r="0.45" fill="#d98c3a" opacity="0.83"/><circle cx="192.9" cy="88.1" r="0.35" fill="#f3c25a" opacity="0.96"/><circle cx="190.7" cy="54.7" r="0.45" fill="#f3c25a" opacity="0.43"/><circle cx="187.8" cy="71.0" r="0.35" fill="#ffd77a" opacity="0.72"/><circle cx="202.2" cy="77.1" r="0.70" fill="#d98c3a" opacity="0.76"/><circle cx="181.4" cy="54.0" r="0.55" fill="#e8a845" opacity="0.97"/><circle cx="192.1" cy="59.2" r="0.35" fill="#ffd77a" opacity="0.87"/><circle cx="185.0" cy="60.0" r="0.55" fill="#e8a845" opacity="0.78"/><circle cx="193.2" cy="60.2" r="0.45" fill="#e8a845" opacity="0.93"/><circle cx="197.1" cy="69.0" r="0.55" fill="#ffd77a" opacity="0.66"/><circle cx="189.0" cy="64.1" r="0.55" fill="#f3c25a" opacity="0.85"/><circle cx="199.1" cy="64.3" r="0.45" fill="#ffd77a" opacity="0.69"/><circle cx="186.4" cy="76.7" r="0.70" fill="#e8a845" opacity="0.90"/><circle cx="213.3" cy="61.9" r="0.45" fill="#d98c3a" opacity="0.65"/><circle cx="210.5" cy="68.3" r="0.55" fill="#e8a845" opacity="0.79"/><circle cx="215.4" cy="60.8" r="0.45" fill="#d98c3a" opacity="0.79"/><circle cx="206.1" cy="58.8" r="0.55" fill="#f3c25a" opacity="0.73"/><circle cx="205.1" cy="63.1" r="0.70" fill="#ffd77a" opacity="0.89"/><circle cx="215.3" cy="61.2" r="0.35" fill="#ffd77a" opacity="0.70"/><circle cx="211.4" cy="57.4" r="0.45" fill="#e8a845" opacity="0.61"/><circle cx="210.3" cy="57.2" r="0.35" fill="#ffd77a" opacity="0.83"/><circle cx="200.8" cy="57.2" r="0.55" fill="#d98c3a" opacity="0.72"/><circle cx="216.5" cy="60.8" r="0.45" fill="#d98c3a" opacity="0.98"/><circle cx="210.2" cy="56.2" r="0.35" fill="#ffd77a" opacity="0.90"/><circle cx="218.4" cy="61.9" r="0.70" fill="#e8a845" opacity="0.84"/><circle cx="207.6" cy="63.9" r="0.45" fill="#e8a845" opacity="0.51"/><circle cx="211.6" cy="52.8" r="0.55" fill="#f3c25a" opacity="0.53"/><circle cx="213.7" cy="61.8" r="0.55" fill="#f3c25a" opacity="0.79"/><circle cx="186.0" cy="125.0" r="0.55" fill="#f3c25a" opacity="0.60"/><circle cx="184.4" cy="127.4" r="0.55" fill="#f3c25a" opacity="0.42"/><circle cx="182.9" cy="124.9" r="0.70" fill="#e8a845" opacity="0.83"/><circle cx="167.6" cy="126.5" r="0.55" fill="#d98c3a" opacity="0.64"/><circle cx="174.0" cy="132.7" r="0.45" fill="#d98c3a" opacity="0.69"/><circle cx="186.0" cy="124.9" r="0.35" fill="#d98c3a" opacity="0.85"/><circle cx="192.4" cy="125.8" r="0.35" fill="#d98c3a" opacity="0.90"/><circle cx="200.4" cy="121.1" r="0.35" fill="#ffd77a" opacity="0.83"/><circle cx="187.7" cy="123.0" r="0.70" fill="#e8a845" opacity="0.55"/><circle cx="191.0" cy="129.6" r="0.45" fill="#ffd77a" opacity="0.52"/><circle cx="179.1" cy="127.1" r="0.35" fill="#d98c3a" opacity="0.59"/><circle cx="193.7" cy="128.9" r="0.45" fill="#f3c25a" opacity="0.85"/><circle cx="194.1" cy="126.4" r="0.35" fill="#ffd77a" opacity="0.47"/><circle cx="187.2" cy="127.9" r="0.45" fill="#d98c3a" opacity="0.76"/><circle cx="214.3" cy="152.7" r="0.55" fill="#d98c3a" opacity="0.50"/><circle cx="213.5" cy="139.2" r="0.70" fill="#ffd77a" opacity="0.69"/><circle cx="188.5" cy="159.9" r="0.35" fill="#d98c3a" opacity="0.92"/><circle cx="206.2" cy="150.7" r="0.45" fill="#d98c3a" opacity="0.99"/><circle cx="218.7" cy="132.1" r="0.35" fill="#e8a845" opacity="0.94"/><circle cx="231.3" cy="133.1" r="0.70" fill="#e8a845" opacity="0.83"/><circle cx="207.5" cy="143.7" r="0.45" fill="#ffd77a" opacity="0.49"/><circle cx="231.3" cy="138.0" r="0.45" fill="#ffd77a" opacity="0.71"/><circle cx="227.8" cy="150.8" r="0.45" fill="#f3c25a" opacity="0.52"/><circle cx="218.9" cy="144.4" r="0.45" fill="#f3c25a" opacity="0.61"/><circle cx="202.0" cy="139.7" r="0.70" fill="#d98c3a" opacity="0.45"/><circle cx="212.9" cy="135.7" r="0.55" fill="#f3c25a" opacity="0.87"/><circle cx="189.8" cy="157.0" r="0.35" fill="#d98c3a" opacity="0.53"/><circle cx="198.9" cy="144.0" r="0.45" fill="#ffd77a" opacity="0.59"/><circle cx="200.3" cy="153.4" r="0.70" fill="#f3c25a" opacity="0.62"/><circle cx="210.8" cy="143.1" r="0.70" fill="#d98c3a" opacity="0.85"/><circle cx="214.3" cy="142.5" r="0.70" fill="#f3c25a" opacity="0.92"/><circle cx="209.8" cy="137.1" r="0.55" fill="#f3c25a" opacity="0.67"/><circle cx="250.0" cy="148.8" r="0.45" fill="#e8a845" opacity="0.57"/><circle cx="202.4" cy="154.9" r="0.55" fill="#ffd77a" opacity="0.85"/><circle cx="208.2" cy="145.7" r="0.45" fill="#e8a845" opacity="0.63"/><circle cx="221.0" cy="151.9" r="0.55" fill="#d98c3a" opacity="0.83"/><circle cx="202.0" cy="161.7" r="0.35" fill="#f3c25a" opacity="0.48"/><circle cx="228.0" cy="154.6" r="0.45" fill="#e8a845" opacity="0.52"/><circle cx="226.0" cy="149.3" r="0.35" fill="#f3c25a" opacity="0.54"/><circle cx="216.4" cy="150.9" r="0.70" fill="#f3c25a" opacity="0.60"/><circle cx="225.2" cy="128.6" r="0.45" fill="#e8a845" opacity="0.86"/><circle cx="218.1" cy="139.0" r="0.55" fill="#d98c3a" opacity="0.77"/><circle cx="210.6" cy="134.7" r="0.55" fill="#e8a845" opacity="0.80"/><circle cx="211.2" cy="145.9" r="0.55" fill="#e8a845" opacity="0.61"/><circle cx="209.7" cy="143.5" r="0.70" fill="#e8a845" opacity="0.71"/><circle cx="218.4" cy="130.7" r="0.45" fill="#ffd77a" opacity="0.86"/><circle cx="225.4" cy="140.5" r="0.55" fill="#e8a845" opacity="0.74"/><circle cx="221.9" cy="166.9" r="0.45" fill="#f3c25a" opacity="0.78"/><circle cx="214.6" cy="150.6" r="0.45" fill="#d98c3a" opacity="0.75"/><circle cx="162.8" cy="111.6" r="0.55" fill="#ffd77a" opacity="0.68"/><circle cx="171.7" cy="122.6" r="0.45" fill="#e8a845" opacity="0.94"/><circle cx="159.1" cy="113.6" r="0.55" fill="#e8a845" opacity="0.95"/><circle cx="171.4" cy="114.6" r="0.45" fill="#f3c25a" opacity="0.96"/><circle cx="170.1" cy="115.1" r="0.55" fill="#e8a845" opacity="0.85"/><circle cx="162.4" cy="116.8" r="0.35" fill="#d98c3a" opacity="0.42"/><circle cx="169.0" cy="125.7" r="0.45" fill="#ffd77a" opacity="0.85"/><circle cx="169.0" cy="107.9" r="0.35" fill="#e8a845" opacity="0.52"/><circle cx="97.4" cy="85.9" r="0.70" fill="#f3c25a" opacity="0.74"/><circle cx="100.7" cy="93.6" r="0.55" fill="#e8a845" opacity="0.74"/><circle cx="96.9" cy="95.0" r="0.35" fill="#e8a845" opacity="0.64"/><circle cx="97.6" cy="85.1" r="0.55" fill="#d98c3a" opacity="0.94"/><circle cx="102.3" cy="79.6" r="0.70" fill="#ffd77a" opacity="0.69"/><circle cx="104.7" cy="84.5" r="0.70" fill="#d98c3a" opacity="0.47"/><circle cx="104.3" cy="97.5" r="0.55" fill="#d98c3a" opacity="0.65"/><circle cx="105.5" cy="87.6" r="0.55" fill="#d98c3a" opacity="0.84"/><circle cx="142.1" cy="40.2" r="0.55" fill="#f3c25a" opacity="0.55"/><circle cx="156.3" cy="41.9" r="0.70" fill="#f3c25a" opacity="0.69"/><circle cx="166.8" cy="51.7" r="0.55" fill="#d98c3a" opacity="0.96"/><circle cx="175.1" cy="32.0" r="0.55" fill="#d98c3a" opacity="0.74"/><circle cx="159.0" cy="51.2" r="0.70" fill="#f3c25a" opacity="0.94"/><circle cx="164.6" cy="50.1" r="0.35" fill="#d98c3a" opacity="0.40"/><circle cx="153.3" cy="49.2" r="0.55" fill="#e8a845" opacity="0.44"/><circle cx="164.6" cy="39.4" r="0.70" fill="#e8a845" opacity="0.61"/><circle cx="150.9" cy="44.2" r="0.35" fill="#d98c3a" opacity="0.94"/><circle cx="149.7" cy="50.5" r="0.70" fill="#e8a845" opacity="0.52"/><circle cx="187.7" cy="30.2" r="0.35" fill="#e8a845" opacity="0.59"/><circle cx="191.6" cy="28.4" r="0.35" fill="#e8a845" opacity="0.78"/><circle cx="173.9" cy="30.1" r="0.45" fill="#e8a845" opacity="0.97"/><circle cx="192.3" cy="34.1" r="0.55" fill="#ffd77a" opacity="0.98"/><circle cx="176.4" cy="39.1" r="0.45" fill="#ffd77a" opacity="0.82"/><circle cx="188.0" cy="33.3" r="0.35" fill="#e8a845" opacity="0.53"/><circle cx="172.5" cy="40.9" r="0.45" fill="#ffd77a" opacity="0.51"/><circle cx="179.3" cy="40.9" r="0.55" fill="#ffd77a" opacity="0.88"/><circle cx="146.1" cy="95.2" r="0.4" fill="#c9a060" opacity="0.30"/><circle cx="251.7" cy="88.3" r="0.4" fill="#c9a060" opacity="0.20"/><circle cx="178.5" cy="129.4" r="0.4" fill="#c9a060" opacity="0.35"/><circle cx="151.7" cy="104.8" r="0.4" fill="#c9a060" opacity="0.43"/><circle cx="244.7" cy="134.9" r="0.4" fill="#c9a060" opacity="0.15"/><circle cx="121.9" cy="68.0" r="0.4" fill="#c9a060" opacity="0.28"/><circle cx="143.4" cy="85.4" r="0.4" fill="#c9a060" opacity="0.45"/><circle cx="187.0" cy="132.1" r="0.4" fill="#c9a060" opacity="0.37"/><circle cx="246.6" cy="112.8" r="0.4" fill="#c9a060" opacity="0.20"/><circle cx="226.4" cy="60.3" r="0.4" fill="#c9a060" opacity="0.42"/><circle cx="170.3" cy="97.3" r="0.4" fill="#c9a060" opacity="0.42"/><circle cx="193.5" cy="107.3" r="0.4" fill="#c9a060" opacity="0.38"/><circle cx="213.6" cy="74.2" r="0.4" fill="#c9a060" opacity="0.30"/><circle cx="217.9" cy="108.4" r="0.4" fill="#c9a060" opacity="0.40"/><circle cx="119.5" cy="37.9" r="0.4" fill="#c9a060" opacity="0.37"/><circle cx="111.3" cy="86.9" r="0.4" fill="#c9a060" opacity="0.38"/><circle cx="215.7" cy="135.0" r="0.4" fill="#c9a060" opacity="0.35"/><circle cx="133.9" cy="87.1" r="0.4" fill="#c9a060" opacity="0.36"/><circle cx="166.5" cy="57.9" r="0.4" fill="#c9a060" opacity="0.31"/><circle cx="212.8" cy="48.0" r="0.4" fill="#c9a060" opacity="0.23"/><circle cx="198.0" cy="177.7" r="0.4" fill="#c9a060" opacity="0.17"/><circle cx="100.2" cy="124.3" r="0.4" fill="#c9a060" opacity="0.25"/><circle cx="123.7" cy="58.8" r="0.4" fill="#c9a060" opacity="0.39"/><circle cx="103.4" cy="97.9" r="0.4" fill="#c9a060" opacity="0.41"/><circle cx="201.5" cy="104.9" r="0.4" fill="#c9a060" opacity="0.20"/><circle cx="133.7" cy="50.9" r="0.4" fill="#c9a060" opacity="0.37"/><circle cx="160.2" cy="86.0" r="0.4" fill="#c9a060" opacity="0.28"/><circle cx="148.8" cy="28.7" r="0.4" fill="#c9a060" opacity="0.37"/><circle cx="187.9" cy="28.2" r="0.4" fill="#c9a060" opacity="0.30"/><circle cx="139.2" cy="51.5" r="0.4" fill="#c9a060" opacity="0.26"/><circle cx="174.7" cy="158.0" r="0.4" fill="#c9a060" opacity="0.35"/><circle cx="127.9" cy="67.8" r="0.4" fill="#c9a060" opacity="0.24"/><circle cx="106.1" cy="113.8" r="0.4" fill="#c9a060" opacity="0.36"/><circle cx="202.7" cy="91.6" r="0.4" fill="#c9a060" opacity="0.38"/><circle cx="149.5" cy="81.5" r="0.4" fill="#c9a060" opacity="0.37"/><circle cx="92.4" cy="88.3" r="0.4" fill="#c9a060" opacity="0.15"/><circle cx="123.2" cy="131.8" r="0.4" fill="#c9a060" opacity="0.18"/><circle cx="120.5" cy="79.8" r="0.4" fill="#c9a060" opacity="0.43"/><circle cx="241.4" cy="87.4" r="0.4" fill="#c9a060" opacity="0.37"/><circle cx="238.2" cy="89.8" r="0.4" fill="#c9a060" opacity="0.24"/><circle cx="230.3" cy="151.6" r="0.4" fill="#c9a060" opacity="0.28"/><circle cx="207.9" cy="119.9" r="0.4" fill="#c9a060" opacity="0.24"/><circle cx="249.3" cy="73.2" r="0.4" fill="#c9a060" opacity="0.22"/><circle cx="207.9" cy="153.2" r="0.4" fill="#c9a060" opacity="0.45"/><circle cx="169.1" cy="37.2" r="0.4" fill="#c9a060" opacity="0.42"/><circle cx="233.7" cy="46.5" r="0.4" fill="#c9a060" opacity="0.20"/><circle cx="225.2" cy="37.6" r="0.4" fill="#c9a060" opacity="0.21"/><circle cx="160.7" cy="112.2" r="0.4" fill="#c9a060" opacity="0.28"/><circle cx="175.6" cy="173.4" r="0.4" fill="#c9a060" opacity="0.39"/><circle cx="121.9" cy="106.0" r="0.4" fill="#c9a060" opacity="0.33"/><circle cx="177.4" cy="42.5" r="0.4" fill="#c9a060" opacity="0.30"/><circle cx="149.3" cy="74.2" r="0.4" fill="#c9a060" opacity="0.30"/><circle cx="122.0" cy="86.0" r="0.4" fill="#c9a060" opacity="0.16"/><circle cx="160.6" cy="179.2" r="0.4" fill="#c9a060" opacity="0.34"/><circle cx="103.0" cy="91.0" r="0.4" fill="#c9a060" opacity="0.30"/><circle cx="113.0" cy="72.0" r="0.4" fill="#c9a060" opacity="0.22"/><circle cx="189.8" cy="111.5" r="0.4" fill="#c9a060" opacity="0.37"/><circle cx="179.2" cy="69.2" r="0.4" fill="#c9a060" opacity="0.22"/><circle cx="189.3" cy="75.2" r="0.4" fill="#c9a060" opacity="0.45"/><circle cx="203.5" cy="52.3" r="0.4" fill="#c9a060" opacity="0.41"/><circle cx="143.1" cy="128.0" r="0.4" fill="#c9a060" opacity="0.41"/><circle cx="151.8" cy="59.6" r="0.4" fill="#c9a060" opacity="0.33"/><circle cx="138.1" cy="102.1" r="0.4" fill="#c9a060" opacity="0.30"/><circle cx="200.4" cy="126.7" r="0.4" fill="#c9a060" opacity="0.27"/><circle cx="105.5" cy="108.8" r="0.4" fill="#c9a060" opacity="0.31"/><circle cx="129.6" cy="85.6" r="0.4" fill="#c9a060" opacity="0.29"/><circle cx="118.3" cy="153.9" r="0.4" fill="#c9a060" opacity="0.40"/><circle cx="119.7" cy="87.4" r="0.4" fill="#c9a060" opacity="0.19"/><circle cx="124.8" cy="94.3" r="0.4" fill="#c9a060" opacity="0.18"/><circle cx="129.4" cy="146.7" r="0.4" fill="#c9a060" opacity="0.19"/><circle cx="215.5" cy="41.0" r="0.4" fill="#c9a060" opacity="0.29"/><circle cx="246.3" cy="104.7" r="0.4" fill="#c9a060" opacity="0.37"/><circle cx="162.5" cy="81.3" r="0.4" fill="#c9a060" opacity="0.41"/><circle cx="127.9" cy="81.9" r="0.4" fill="#c9a060" opacity="0.19"/><circle cx="181.9" cy="49.3" r="0.4" fill="#c9a060" opacity="0.38"/><circle cx="169.5" cy="173.6" r="0.4" fill="#c9a060" opacity="0.19"/><circle cx="116.0" cy="102.1" r="0.4" fill="#c9a060" opacity="0.43"/><circle cx="159.0" cy="167.5" r="0.4" fill="#c9a060" opacity="0.22"/><circle cx="207.3" cy="82.7" r="0.4" fill="#c9a060" opacity="0.38"/><circle cx="132.6" cy="156.0" r="0.4" fill="#c9a060" opacity="0.31"/><circle cx="170.4" cy="20.5" r="0.4" fill="#c9a060" opacity="0.39"/><circle cx="132.3" cy="105.2" r="0.4" fill="#c9a060" opacity="0.41"/><circle cx="145.5" cy="173.6" r="0.4" fill="#c9a060" opacity="0.42"/><circle cx="231.6" cy="153.8" r="0.4" fill="#c9a060" opacity="0.42"/><circle cx="167.0" cy="150.0" r="0.4" fill="#c9a060" opacity="0.40"/><circle cx="152.3" cy="166.4" r="0.4" fill="#c9a060" opacity="0.42"/><circle cx="188.0" cy="106.3" r="0.4" fill="#c9a060" opacity="0.25"/><circle cx="142.3" cy="131.8" r="0.4" fill="#c9a060" opacity="0.39"/><circle cx="224.5" cy="56.2" r="0.4" fill="#c9a060" opacity="0.27"/><circle cx="131.3" cy="165.5" r="0.4" fill="#c9a060" opacity="0.16"/></g>
 <circle cx="174" cy="99.5" r="83" fill="url(#ed)"/>
 <circle cx="174" cy="99.5" r="83" fill="url(#eh)"/>
 <circle cx="174" cy="99.5" r="82.4" fill="none" stroke="url(#er)" stroke-width="1.3"/>
</g></g>
</svg>
</div>
<!-- selection handles -->
<div class="a" style="left:275px;top:178px;width:4px;height:4px;background:#fff;border:1px solid #888"></div>
<div class="a" style="left:450px;top:178px;width:4px;height:4px;background:#fff;border:1px solid #888"></div>
<div class="a" style="left:625px;top:178px;width:4px;height:4px;background:#fff;border:1px solid #888"></div>
<div class="a" style="left:275px;top:277px;width:4px;height:4px;background:#fff;border:1px solid #888"></div>
<div class="a" style="left:625px;top:277px;width:4px;height:4px;background:#fff;border:1px solid #888"></div>
<div class="a" style="left:275px;top:376px;width:4px;height:4px;background:#fff;border:1px solid #888"></div>
<div class="a" style="left:450px;top:376px;width:4px;height:4px;background:#fff;border:1px solid #888"></div>
<div class="a" style="left:625px;top:376px;width:4px;height:4px;background:#fff;border:1px solid #888"></div>

<!-- ===== Timeline ===== -->
<div class="a" style="left:105px;top:445px;width:694px;height:63px;background:#fff"></div>
<div class="t" style="left:119px;top:451.8px;font-size:9.19px;color:#1a84d8;transform:scaleX(0.96);transform-origin:0 50%">Timeline</div>
<div class="t" style="left:166px;top:451.8px;font-size:9.19px;color:#5a6066;transform:scaleX(0.883);transform-origin:0 50%">States</div>
<div class="t" style="left:203px;top:451.8px;font-size:9.19px;color:#5a6066;transform:scaleX(0.958);transform-origin:0 50%">Notes</div>
<svg style="left:748px;top:452px" width="10" height="10"><path d="M5 0v9" stroke="#1a7ed6" stroke-width="1"/><path d="M3.5 0h3l-1.5 2z" fill="#1a7ed6"/><ellipse cx="5" cy="5.5" rx="4" ry="1.6" fill="none" stroke="#666" stroke-width="0.9"/><ellipse cx="5" cy="7.8" rx="4" ry="1.6" fill="none" stroke="#666" stroke-width="0.9"/></svg>
<div class="ar" style="left:769px;top:456px;border-top-color:#a0a6aa;border-left-width:2.5px;border-right-width:2.5px;border-top-width:2.5px"></div>
<svg style="left:778px;top:453px" width="8" height="9"><path d="M0.5 3.5h6v5h-6z M2 3.5v-3h5.5v5.5h-1" fill="none" stroke="#9aa0a5" stroke-width="0.9"/></svg>
<div class="a" style="left:105px;top:468px;width:683px;height:14px;background:#f0f4f7"></div>
<div class="a" style="left:105px;top:481px;width:683px;height:1px;background:#f8fafb"></div><div class="a" style="left:105px;top:482px;width:683px;height:17px;background:#d3e8f7;border-top:2px solid #bcdcf2;border-bottom:1px solid #bcdcf2"></div>
<div class="a" style="left:120px;top:470px;width:10px;height:10px;background:#fff;border:1px solid #dde2e6"></div>
<svg style="left:121px;top:473px" width="8" height="5"><path d="M0.5 2.5Q4 -1 7.5 2.5Q4 6 0.5 2.5z" fill="#3c4a52"/><circle cx="4" cy="2.5" r="1" fill="#fff"/></svg>
<div class="a" style="left:139px;top:470px;width:10px;height:10px;background:#fff;border:1px solid #dde2e6"></div>
<svg style="left:141px;top:472px" width="6" height="6"><path d="M1.5 2.5v-1a1.5 1.5 0 0 1 3 0v1" fill="none" stroke="#3c4a52" stroke-width="0.9"/><rect x="0.5" y="2.5" width="5" height="3.5" fill="#3c4a52"/></svg>
<div class="a" style="left:120px;top:486px;width:10px;height:10px;background:#fff;border:1px solid #c9dced"></div>
<svg style="left:121px;top:489px" width="8" height="5"><path d="M0.5 2.5Q4 -1 7.5 2.5Q4 6 0.5 2.5z" fill="#3c4a52"/><circle cx="4" cy="2.5" r="1" fill="#fff"/></svg>
<div class="a" style="left:139px;top:486px;width:10px;height:10px;background:#fff;border:1px solid #c9dced"></div>
<div class="t" style="left:162px;top:486px;font-size:6.2px;color:#5a6066">Video 1</div>
<div class="a" style="left:230px;top:468px;width:1px;height:40px;background:#9ccbef"></div>
<svg style="left:226px;top:477px" width="10" height="6"><path d="M0 0h9l-4.5 5.5z" fill="#1a7ed6"/></svg>
<div class="a" style="left:231px;top:484px;width:556px;height:14px;background:#0884dc"></div>
<div class="a" style="left:236px;top:488px;width:8px;height:6px;background:#f4f4f4;border:1px solid #b9a98f"></div>
<div class="t" style="left:250px;top:486px;font-size:6.3px;color:#fff">file_example_MOV_1280_1_4MB.mp4</div>
<div style="position:absolute;left:0;top:0;width:788px;height:508px;overflow:hidden"><div class="t" style="left:256.5px;top:469px;font-size:6px;color:#5a6066;width:30px;text-align:center;margin-left:-15px">00:01</div><div class="t" style="left:283.3px;top:469px;font-size:6px;color:#5a6066;width:30px;text-align:center;margin-left:-15px">00:02</div><div class="t" style="left:310.1px;top:469px;font-size:6px;color:#5a6066;width:30px;text-align:center;margin-left:-15px">00:03</div><div class="t" style="left:336.9px;top:469px;font-size:6px;color:#5a6066;width:30px;text-align:center;margin-left:-15px">00:04</div><div class="t" style="left:363.7px;top:469px;font-size:6px;color:#5a6066;width:30px;text-align:center;margin-left:-15px">00:05</div><div class="t" style="left:390.4px;top:469px;font-size:6px;color:#5a6066;width:30px;text-align:center;margin-left:-15px">00:06</div><div class="t" style="left:417.2px;top:469px;font-size:6px;color:#5a6066;width:30px;text-align:center;margin-left:-15px">00:07</div><div class="t" style="left:444.0px;top:469px;font-size:6px;color:#5a6066;width:30px;text-align:center;margin-left:-15px">00:08</div><div class="t" style="left:470.8px;top:469px;font-size:6px;color:#5a6066;width:30px;text-align:center;margin-left:-15px">00:09</div><div class="t" style="left:497.6px;top:469px;font-size:6px;color:#5a6066;width:30px;text-align:center;margin-left:-15px">00:10</div><div class="t" style="left:524.4px;top:469px;font-size:6px;color:#5a6066;width:30px;text-align:center;margin-left:-15px">00:11</div><div class="t" style="left:551.2px;top:469px;font-size:6px;color:#5a6066;width:30px;text-align:center;margin-left:-15px">00:12</div><div class="t" style="left:578.0px;top:469px;font-size:6px;color:#5a6066;width:30px;text-align:center;margin-left:-15px">00:13</div><div class="t" style="left:604.8px;top:469px;font-size:6px;color:#5a6066;width:30px;text-align:center;margin-left:-15px">00:14</div><div class="t" style="left:631.6px;top:469px;font-size:6px;color:#5a6066;width:30px;text-align:center;margin-left:-15px">00:15</div><div class="t" style="left:658.3px;top:469px;font-size:6px;color:#5a6066;width:30px;text-align:center;margin-left:-15px">00:16</div><div class="t" style="left:685.1px;top:469px;font-size:6px;color:#5a6066;width:30px;text-align:center;margin-left:-15px">00:17</div><div class="t" style="left:711.9px;top:469px;font-size:6px;color:#5a6066;width:30px;text-align:center;margin-left:-15px">00:18</div><div class="t" style="left:738.7px;top:469px;font-size:6px;color:#5a6066;width:30px;text-align:center;margin-left:-15px">00:19</div><div class="t" style="left:765.5px;top:469px;font-size:6px;color:#5a6066;width:30px;text-align:center;margin-left:-15px">00:20</div><div class="t" style="left:792.3px;top:469px;font-size:6px;color:#5a6066;width:30px;text-align:center;margin-left:-15px">00:21</div><div class="a" style="left:230px;top:479px;width:1px;height:3px;background:#b9bec2"></div><div class="a" style="left:236px;top:480px;width:1px;height:2px;background:#b9bec2"></div><div class="a" style="left:243px;top:480px;width:1px;height:2px;background:#b9bec2"></div><div class="a" style="left:250px;top:480px;width:1px;height:2px;background:#b9bec2"></div><div class="a" style="left:256px;top:479px;width:1px;height:3px;background:#b9bec2"></div><div class="a" style="left:263px;top:480px;width:1px;height:2px;background:#b9bec2"></div><div class="a" style="left:270px;top:480px;width:1px;height:2px;background:#b9bec2"></div><div class="a" style="left:277px;top:480px;width:1px;height:2px;background:#b9bec2"></div><div class="a" style="left:283px;top:479px;width:1px;height:3px;background:#b9bec2"></div><div class="a" style="left:290px;top:480px;width:1px;height:2px;background:#b9bec2"></div><div class="a" style="left:297px;top:480px;width:1px;height:2px;background:#b9bec2"></div><div class="a" style="left:303px;top:480px;width:1px;height:2px;background:#b9bec2"></div><div class="a" style="left:310px;top:479px;width:1px;height:3px;background:#b9bec2"></div><div class="a" style="left:317px;top:480px;width:1px;height:2px;background:#b9bec2"></div><div class="a" style="left:323px;top:480px;width:1px;height:2px;background:#b9bec2"></div><div class="a" style="left:330px;top:480px;width:1px;height:2px;background:#b9bec2"></div><div class="a" style="left:337px;top:479px;width:1px;height:3px;background:#b9bec2"></div><div class="a" style="left:344px;top:480px;width:1px;height:2px;background:#b9bec2"></div><div class="a" style="left:350px;top:480px;width:1px;height:2px;background:#b9bec2"></div><div class="a" style="left:357px;top:480px;width:1px;height:2px;background:#b9bec2"></div><div class="a" style="left:364px;top:479px;width:1px;height:3px;background:#b9bec2"></div><div class="a" style="left:370px;top:480px;width:1px;height:2px;background:#b9bec2"></div><div class="a" style="left:377px;top:480px;width:1px;height:2px;background:#b9bec2"></div><div class="a" style="left:384px;top:480px;width:1px;height:2px;background:#b9bec2"></div><div class="a" style="left:390px;top:479px;width:1px;height:3px;background:#b9bec2"></div><div class="a" style="left:397px;top:480px;width:1px;height:2px;background:#b9bec2"></div><div class="a" style="left:404px;top:480px;width:1px;height:2px;background:#b9bec2"></div><div class="a" style="left:411px;top:480px;width:1px;height:2px;background:#b9bec2"></div><div class="a" style="left:417px;top:479px;width:1px;height:3px;background:#b9bec2"></div><div class="a" style="left:424px;top:480px;width:1px;height:2px;background:#b9bec2"></div><div class="a" style="left:431px;top:480px;width:1px;height:2px;background:#b9bec2"></div><div class="a" style="left:437px;top:480px;width:1px;height:2px;background:#b9bec2"></div><div class="a" style="left:444px;top:479px;width:1px;height:3px;background:#b9bec2"></div><div class="a" style="left:451px;top:480px;width:1px;height:2px;background:#b9bec2"></div><div class="a" style="left:457px;top:480px;width:1px;height:2px;background:#b9bec2"></div><div class="a" style="left:464px;top:480px;width:1px;height:2px;background:#b9bec2"></div><div class="a" style="left:471px;top:479px;width:1px;height:3px;background:#b9bec2"></div><div class="a" style="left:478px;top:480px;width:1px;height:2px;background:#b9bec2"></div><div class="a" style="left:484px;top:480px;width:1px;height:2px;background:#b9bec2"></div><div class="a" style="left:491px;top:480px;width:1px;height:2px;background:#b9bec2"></div><div class="a" style="left:498px;top:479px;width:1px;height:3px;background:#b9bec2"></div><div class="a" style="left:504px;top:480px;width:1px;height:2px;background:#b9bec2"></div><div class="a" style="left:511px;top:480px;width:1px;height:2px;background:#b9bec2"></div><div class="a" style="left:518px;top:480px;width:1px;height:2px;background:#b9bec2"></div><div class="a" style="left:524px;top:479px;width:1px;height:3px;background:#b9bec2"></div><div class="a" style="left:531px;top:480px;width:1px;height:2px;background:#b9bec2"></div><div class="a" style="left:538px;top:480px;width:1px;height:2px;background:#b9bec2"></div><div class="a" style="left:544px;top:480px;width:1px;height:2px;background:#b9bec2"></div><div class="a" style="left:551px;top:479px;width:1px;height:3px;background:#b9bec2"></div><div class="a" style="left:558px;top:480px;width:1px;height:2px;background:#b9bec2"></div><div class="a" style="left:565px;top:480px;width:1px;height:2px;background:#b9bec2"></div><div class="a" style="left:571px;top:480px;width:1px;height:2px;background:#b9bec2"></div><div class="a" style="left:578px;top:479px;width:1px;height:3px;background:#b9bec2"></div><div class="a" style="left:585px;top:480px;width:1px;height:2px;background:#b9bec2"></div><div class="a" style="left:591px;top:480px;width:1px;height:2px;background:#b9bec2"></div><div class="a" style="left:598px;top:480px;width:1px;height:2px;background:#b9bec2"></div><div class="a" style="left:605px;top:479px;width:1px;height:3px;background:#b9bec2"></div><div class="a" style="left:611px;top:480px;width:1px;height:2px;background:#b9bec2"></div><div class="a" style="left:618px;top:480px;width:1px;height:2px;background:#b9bec2"></div><div class="a" style="left:625px;top:480px;width:1px;height:2px;background:#b9bec2"></div><div class="a" style="left:632px;top:479px;width:1px;height:3px;background:#b9bec2"></div><div class="a" style="left:638px;top:480px;width:1px;height:2px;background:#b9bec2"></div><div class="a" style="left:645px;top:480px;width:1px;height:2px;background:#b9bec2"></div><div class="a" style="left:652px;top:480px;width:1px;height:2px;background:#b9bec2"></div><div class="a" style="left:658px;top:479px;width:1px;height:3px;background:#b9bec2"></div><div class="a" style="left:665px;top:480px;width:1px;height:2px;background:#b9bec2"></div><div class="a" style="left:672px;top:480px;width:1px;height:2px;background:#b9bec2"></div><div class="a" style="left:678px;top:480px;width:1px;height:2px;background:#b9bec2"></div><div class="a" style="left:685px;top:479px;width:1px;height:3px;background:#b9bec2"></div><div class="a" style="left:692px;top:480px;width:1px;height:2px;background:#b9bec2"></div><div class="a" style="left:699px;top:480px;width:1px;height:2px;background:#b9bec2"></div><div class="a" style="left:705px;top:480px;width:1px;height:2px;background:#b9bec2"></div><div class="a" style="left:712px;top:479px;width:1px;height:3px;background:#b9bec2"></div><div class="a" style="left:719px;top:480px;width:1px;height:2px;background:#b9bec2"></div><div class="a" style="left:725px;top:480px;width:1px;height:2px;background:#b9bec2"></div><div class="a" style="left:732px;top:480px;width:1px;height:2px;background:#b9bec2"></div><div class="a" style="left:739px;top:479px;width:1px;height:3px;background:#b9bec2"></div><div class="a" style="left:745px;top:480px;width:1px;height:2px;background:#b9bec2"></div><div class="a" style="left:752px;top:480px;width:1px;height:2px;background:#b9bec2"></div><div class="a" style="left:759px;top:480px;width:1px;height:2px;background:#b9bec2"></div><div class="a" style="left:766px;top:479px;width:1px;height:3px;background:#b9bec2"></div><div class="a" style="left:772px;top:480px;width:1px;height:2px;background:#b9bec2"></div><div class="a" style="left:779px;top:480px;width:1px;height:2px;background:#b9bec2"></div><div class="a" style="left:786px;top:480px;width:1px;height:2px;background:#b9bec2"></div></div>
<div class="a" style="left:788px;top:468px;width:11px;height:40px;background:#e3e7ea"></div>
<div class="a" style="left:788px;top:468px;width:11px;height:11px;background:#eceff1"></div>
<div class="ar" style="left:791px;top:473px;border-top:none;border-bottom:2.5px solid #b0b5b9;border-left-width:2.5px;border-right-width:2.5px"></div>

<!-- ===== Right panel ===== -->
<div class="a" style="left:799px;top:114px;width:1px;height:394px;background:#f4f6f8"></div>
<div class="a" style="left:800px;top:114px;width:197px;height:394px;background:#fff"></div>
<div class="a" style="left:800px;top:114px;width:197px;height:45px;background:#f0f4f7"></div>
<div class="t" style="left:812px;top:120.2px;font-size:9.05px;color:#56626a;transform:scaleX(0.943);transform-origin:0 50%">Triggers</div><div class="a" style="left:800px;top:114px;width:197px;height:1px;background:#f7f9fa"></div>
<div class="ar" style="left:969px;top:124px;border-top-color:#a0a6aa;border-left-width:2.5px;border-right-width:2.5px;border-top-width:2.5px"></div>
<svg style="left:979px;top:121px" width="8" height="9"><path d="M0.5 3.5h6v5h-6z M2 3.5v-3h5.5v5.5h-1" fill="none" stroke="#9aa0a5" stroke-width="0.9"/></svg>
<div class="a" style="left:811px;top:136px;width:16px;height:16px;background:#fff;border:1px solid #d5dade"></div>
<svg style="left:815px;top:139px" width="8" height="10"><path d="M0.5 0.5h4.5l2.5 2.5v6.5h-7z M5 0.5v2.5h2.5" fill="none" stroke="#555" stroke-width="0.9"/></svg>
<div class="a" style="left:828px;top:136px;width:16px;height:16px;background:#f0f4f7;border:1px solid #d5dade"></div>
<svg style="left:832px;top:139px" width="9" height="10"><path d="M0.5 1.5h5M0.5 1.5v8h6.5v-4" fill="none" stroke="#b8bcc0" stroke-width="0.9"/><path d="M3 7l1-2.5l4-4l1.2 1.2l-4 4z" fill="none" stroke="#b8bcc0" stroke-width="0.8"/></svg>
<div class="a" style="left:845px;top:136px;width:16px;height:16px;background:#f0f4f7;border:1px solid #d5dade"></div>
<svg style="left:848px;top:139px" width="10" height="10"><path d="M0.5 0.5h4.5l1 1v6h-5.5z M3 3h4.5l2 2v4.5h-6.5z" fill="none" stroke="#b8bcc0" stroke-width="0.9"/></svg>
<div class="a" style="left:862px;top:136px;width:16px;height:16px;background:#f0f4f7;border:1px solid #d5dade"></div>
<svg style="left:865px;top:139px" width="10" height="10"><path d="M1.5 1.5h2v-1h2v1h2v7.5h-6z M4 4h5.5v5.5h-5.5z" fill="none" stroke="#b8bcc0" stroke-width="0.9"/></svg>
<div class="a" style="left:878px;top:136px;width:16px;height:16px;background:#f0f4f7;border:1px solid #d5dade"></div>
<svg style="left:882px;top:139px" width="8" height="10"><path d="M0 1.5h8M2.5 1.5v-1h3v1M1 2.5l0.8 7h4.4l0.8-7M3 4v4M5 4v4" fill="none" stroke="#b8bcc0" stroke-width="0.9"/></svg>
<div class="a" style="left:895px;top:136px;width:16px;height:16px;background:#f0f4f7;border:1px solid #d5dade"></div>
<div class="a" style="left:896px;top:144px;width:14px;height:1px;background:#d5dade"></div>
<div class="ar" style="left:901px;top:139px;border-top:none;border-bottom:2.5px solid #9aa0a5;border-left-width:3px;border-right-width:3px"></div>
<div class="ar" style="left:901px;top:147px;border-top-color:#9aa0a5;border-top-width:2.5px;border-left-width:3px;border-right-width:3px"></div>
<div class="a" style="left:932px;top:139px;width:11px;height:10px;background:#fff;border:1px solid #d5dade"></div>
<div class="t" style="left:947px;top:139px;font-size:7.6px;color:#5a6066">Group</div>
<div class="a" style="left:973px;top:136px;width:16px;height:16px;background:#fff;border:1px solid #d5dade"></div>
<svg style="left:976px;top:139px" width="10" height="10"><rect x="0.5" y="0.5" width="9" height="9" fill="#dde8f5" stroke="#6a7a88" stroke-width="0.9"/><rect x="0.5" y="0.5" width="9" height="2" fill="#3c4a52"/><path d="M3.5 4.5l3 3M6.5 4.5l-3 3" stroke="#5a8ed0" stroke-width="0.8"/></svg>
<!-- player triggers -->
<div class="a" style="left:802px;top:159px;width:195px;height:16px;background:#f4f6f8;border-bottom:1px solid #e4e8eb"></div>
<div class="t" style="left:807px;top:163px;font-size:7.6px;color:#4f565c">Player Triggers</div>
<svg style="left:986px;top:163px" width="6" height="9"><path d="M0 0.5h6M0 8.5h6M3 1.5v2.5M3 7.5v-2.5M1.5 2.5l1.5-1l1.5 1M1.5 6.5l1.5 1l1.5-1" fill="none" stroke="#9aa0a5" stroke-width="0.8"/></svg>
<div class="ar" style="left:807px;top:182px;border-top-color:#a0a6aa;border-left-width:2.5px;border-right-width:2.5px;border-top-width:3px"></div>
<div class="t" style="left:822px;top:179px;font-size:6.7px;color:#3f464c;font-weight:bold">Next Button / Swipe Next</div>
<div class="a" style="left:802px;top:190px;width:195px;height:1px;background:#e8ebee"></div>
<div class="t" style="left:822px;top:195px;font-size:6.4px;color:#6a7075">Jump to slide <span style="color:#1f7aa8">next slide</span></div>
<div class="t" style="left:830px;top:206px;font-size:6.4px;color:#6a7075">When the <span style="color:#5f7a1e">user clicks</span> or <span style="color:#5f7a1e">swipes</span> <span style="color:#1f7aa8">next</span></div>
<div class="a" style="left:802px;top:218px;width:195px;height:1px;background:#e8ebee"></div>
<div class="ar" style="left:807px;top:226px;border-top-color:#a0a6aa;border-left-width:2.5px;border-right-width:2.5px;border-top-width:3px"></div>
<div class="t" style="left:822px;top:222px;font-size:6.5px;color:#3f464c;font-weight:bold">Previous Button / Swipe Previous</div>
<div class="a" style="left:802px;top:234px;width:195px;height:1px;background:#e8ebee"></div>
<div class="t" style="left:822px;top:238.5px;font-size:6.4px;color:#6a7075">Jump to slide <span style="color:#1f7aa8">previous slide</span></div>
<div class="t" style="left:830px;top:249.5px;font-size:6.4px;color:#6a7075">When the <span style="color:#5f7a1e">user clicks</span> or <span style="color:#5f7a1e">swipes</span> <span style="color:#1f7aa8">previous</span></div>
<div class="a" style="left:802px;top:261px;width:195px;height:1px;background:#e8ebee"></div>
<!-- slide layers -->
<div class="a" style="left:800px;top:432px;width:197px;height:23px;background:#f0f4f7;border-top:1px solid #e2e6e9;border-bottom:1px solid #e2e6e9"></div>
<div class="t" style="left:811px;top:438px;font-size:8.92px;color:#5a6066;transform:scaleX(0.958);transform-origin:0 50%">Slide Layers</div>
<div class="ar" style="left:969px;top:442px;border-top-color:#a0a6aa;border-left-width:2.5px;border-right-width:2.5px;border-top-width:2.5px"></div>
<svg style="left:979px;top:439px" width="8" height="9"><path d="M0.5 3.5h6v5h-6z M2 3.5v-3h5.5v5.5h-1" fill="none" stroke="#9aa0a5" stroke-width="0.9"/></svg>
<div class="a" style="left:997px;top:0;width:2px;height:508px;background:#dfe3e6"></div>

<div class="a" style="left:0;top:77px;width:2px;height:15px;background:#fbfcfd"></div>
<div class="a" style="left:0;top:114px;width:1px;height:394px;background:#f8fafb"></div>
<!-- red highlight box -->
<div class="a" style="left:322px;top:-1px;width:91px;height:88px;border:3px solid #ec2a1c"></div>

</body></html>
